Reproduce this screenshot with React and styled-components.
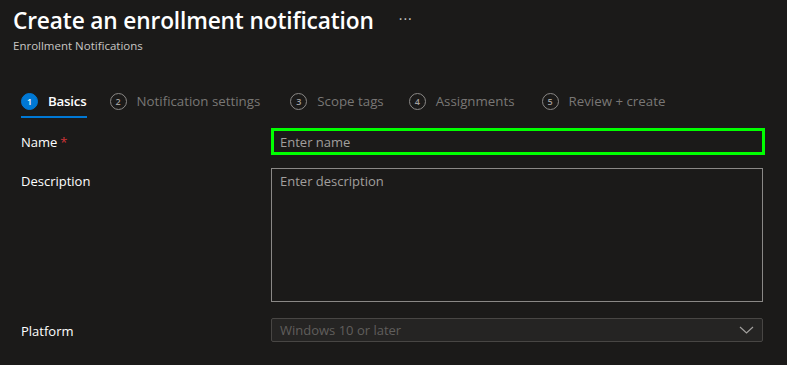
import styled, { createGlobalStyle } from 'styled-components'

const GlobalStyle = createGlobalStyle`
  body {
    margin: 0;
    background: #1b1a19;
    font-family: 'Segoe UI', 'Open Sans', 'Liberation Sans', sans-serif;
    color: #ffffff;
  }
`

const Page = styled.div`
  width: 787px;
  height: 365px;
  overflow: hidden;
  background: #1b1a19;
`

const Header = styled.header`
  padding: 4px 0 0 13px;
`

const TitleRow = styled.div`
  display: flex;
  align-items: center;
  gap: 25px;

  h1 {
    margin: 0;
    font-size: 22.7px;
    font-weight: 600;
    line-height: 34px;
    letter-spacing: -0.15px;
  }
`

const More = styled.span`
  color: #c8c6c4;
  font-size: 14px;
  letter-spacing: 1px;
  position: relative;
  top: -3px;
`

const Subtitle = styled.p`
  margin: 0;
  font-size: 11.5px;
  line-height: 16px;
  color: #c8c6c4;
`

const Steps = styled.nav`
  display: flex;
  margin: 32px 0 0 21px;
  height: 32px;
`

const Step = styled.div`
  display: flex;
  align-items: center;
  gap: 10px;
  height: 30px;
  margin-right: ${({ $gap }) => $gap}px;
  border-bottom: 2px solid ${({ $active }) => ($active ? '#0078d4' : 'transparent')};
  color: ${({ $active }) => ($active ? '#ffffff' : '#797775')};
  font-size: 13.3px;
  font-weight: ${({ $active }) => ($active ? 600 : 400)};
  letter-spacing: ${({ $active }) => ($active ? '-0.2px' : '0')};
`

const Circle = styled.span`
  box-sizing: border-box;
  width: 17px;
  height: 17px;
  border-radius: 50%;
  display: inline-flex;
  align-items: center;
  justify-content: center;
  font-size: 9px;
  font-weight: 600;
  letter-spacing: 0;
  background: ${({ $active }) => ($active ? '#0078d4' : 'transparent')};
  border: 1px solid ${({ $active }) => ($active ? '#0078d4' : '#8a8886')};
  color: ${({ $active }) => ($active ? '#ffffff' : '#a19f9d')};
`

const Form = styled.div`
  display: grid;
  grid-template-columns: 250px 494px;
  margin: 10px 0 0 21px;
  row-gap: 13px;
`

const Label = styled.label`
  font-size: 13px;
  line-height: 20px;
  align-self: ${({ $top }) => ($top ? 'start' : 'center')};
  padding-top: ${({ $top }) => ($top ? '3px' : '0')};
  margin-top: ${({ $offset }) => $offset || 0}px;

  span {
    color: #d13438;
    margin-left: 3px;
  }
`

const Input = styled.input`
  box-sizing: border-box;
  width: 494px;
  height: 27px;
  border: 3px solid #00ff00;
  background: #1b1a19;
  color: #ffffff;
  padding: 0 6px;
  font: inherit;
  font-size: 13px;
  outline: none;

  &::placeholder {
    color: #a19f9d;
  }
`

const TextArea = styled.textarea`
  box-sizing: border-box;
  width: 492px;
  height: 134px;
  border: 1px solid #8a8886;
  background: #1b1a19;
  color: #ffffff;
  padding: 3px 8px;
  font: inherit;
  font-size: 13px;
  resize: none;
  outline: none;

  &::placeholder {
    color: #a19f9d;
  }
`

const Select = styled.div`
  box-sizing: border-box;
  width: 492px;
  height: 24px;
  margin-top: 3px;
  border: 1px solid #484644;
  border-radius: 2px;
  background: #252423;
  color: #605e5c;
  font-size: 13px;
  display: flex;
  align-items: center;
  justify-content: space-between;
  padding: 0 8px;
`

const steps = [
  { n: 1, label: 'Basics', gap: 23, active: true },
  { n: 2, label: 'Notification settings', gap: 30 },
  { n: 3, label: 'Scope tags', gap: 25 },
  { n: 4, label: 'Assignments', gap: 27 },
  { n: 5, label: 'Review + create', gap: 0 },
]

export default function App() {
  return (
    <Page>
      <GlobalStyle />
      <Header>
        <TitleRow>
          <h1>Create an enrollment notification</h1>
          <More>···</More>
        </TitleRow>
        <Subtitle>Enrollment Notifications</Subtitle>
      </Header>
      <Steps>
        {steps.map((s) => (
          <Step key={s.n} $active={s.active} $gap={s.gap}>
            <Circle $active={s.active}>{s.n}</Circle>
            {s.label}
          </Step>
        ))}
      </Steps>
      <Form>
        <Label>
          Name<span>*</span>
        </Label>
        <Input placeholder="Enter name" />
        <Label $top>Description</Label>
        <TextArea placeholder="Enter description" />
        <Label $offset={4}>Platform</Label>
        <Select>
          Windows 10 or later
          <svg width="15" height="8" viewBox="0 0 15 8">
            <path d="M1 1l6.5 6L14 1" fill="none" stroke="#a19f9d" strokeWidth="1.2" />
          </svg>
        </Select>
      </Form>
    </Page>
  )
}
